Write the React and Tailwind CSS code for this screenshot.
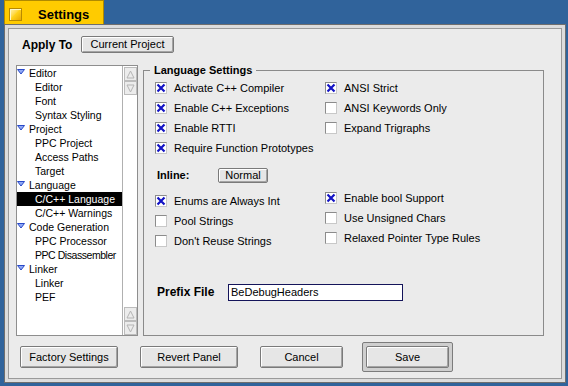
import React from 'react';

const tree = [
  { label: 'Editor', cat: true },
  { label: 'Editor' },
  { label: 'Font' },
  { label: 'Syntax Styling' },
  { label: 'Project', cat: true },
  { label: 'PPC Project' },
  { label: 'Access Paths' },
  { label: 'Target' },
  { label: 'Language', cat: true },
  { label: 'C/C++ Language', selected: true },
  { label: 'C/C++ Warnings' },
  { label: 'Code Generation', cat: true },
  { label: 'PPC Processor' },
  { label: 'PPC Disassembler', tight: true },
  { label: 'Linker', cat: true },
  { label: 'Linker' },
  { label: 'PEF' },
];

const font = "font-['Liberation_Sans',Arial,sans-serif]";

function Check({ on, label }) {
  return (
    <div className="flex h-[20px] items-center gap-[7px]">
      <span className="flex h-[12px] w-[12px] shrink-0 items-center justify-center border border-[#8c8c8c] border-b-[#c8c8c8] border-r-[#c8c8c8] bg-white">
        {on ? (
          <svg width="10" height="10" viewBox="0 0 10 10">
            <path d="M1.5 1.5 L8.5 8.5 M8.5 1.5 L1.5 8.5" stroke="#1212c4" strokeWidth="2.2" />
          </svg>
        ) : null}
      </span>
      <span className="whitespace-nowrap text-[11px] text-black">{label}</span>
    </div>
  );
}

function Button({ children, className = '' }) {
  return (
    <div
      className={`flex items-center justify-center whitespace-nowrap rounded-[2px] border border-[#7a7a7a] bg-[#e6e6e6] text-[11px] text-black shadow-[inset_1px_1px_0_#ffffff,inset_-1px_-1px_0_#a4a4a4] ${className}`}
    >
      {children}
    </div>
  );
}

function Arrow({ up }) {
  return (
    <div className="flex h-[14px] w-[13px] items-center justify-center border border-[#bcbcbc] bg-[#ececec]">
      <svg width="9" height="9" viewBox="0 0 9 9">
        {up ? (
          <path d="M4.5 1 L8 8 L1 8 Z" fill="none" stroke="#b4b4b4" strokeWidth="1" />
        ) : (
          <path d="M1 1 L8 1 L4.5 8 Z" fill="none" stroke="#b4b4b4" strokeWidth="1" />
        )}
      </svg>
    </div>
  );
}

function TreeList() {
  return (
    <div className="mt-[2px] flex h-[271px] w-[122px] border border-[#8e8e8e] bg-white">
      <div className="min-w-0 flex-1">
        {tree.map((item, i) => (
          <div
            key={i}
            className={`flex h-[14px] items-center overflow-hidden whitespace-nowrap text-[10.5px] leading-none ${item.selected ? 'bg-black text-white' : 'text-black'} ${item.cat ? '' : 'pl-[18px]'} ${item.tight ? 'tracking-[-0.45px]' : ''}`}
          >
            {item.cat ? (
              <svg width="8" height="6" viewBox="0 0 8 6" className="mr-[4px] mb-[3px] shrink-0">
                <path d="M0.5 0.5 L7.5 0.5 L4 5 Z" fill="#8fa8f4" stroke="#2848c8" strokeWidth="1" />
              </svg>
            ) : null}
            <span>{item.label}</span>
          </div>
        ))}
      </div>
      <div className="flex w-[15px] shrink-0 flex-col justify-between border-l border-[#b0b0b0] bg-white pl-[1px] pt-[1px]">
        <div>
          <Arrow up />
          <Arrow />
        </div>
        <div>
          <Arrow up />
          <Arrow />
        </div>
      </div>
    </div>
  );
}

function LanguageGroup() {
  return (
    <div className="flex h-[273px] w-[401px] flex-col">
      <div className="flex h-[14px]">
        <div className="h-[7px] w-[7px] self-end border-l border-t border-[#8a8a8a]" />
        <span className="px-[4px] text-[11px] font-bold leading-[14px] text-black">Language Settings</span>
        <div className="h-[7px] flex-1 self-end border-r border-t border-[#8a8a8a]" />
      </div>
      <div className="flex flex-1 flex-col border-x border-b border-[#8a8a8a] pl-[11px] pt-[1px]">
        <div className="flex">
          <div className="w-[170px]">
            <Check on label="Activate C++ Compiler" />
            <Check on label="Enable C++ Exceptions" />
            <Check on label="Enable RTTI" />
            <Check on label="Require Function Prototypes" />
          </div>
          <div>
            <Check on label="ANSI Strict" />
            <Check label="ANSI Keywords Only" />
            <Check label="Expand Trigraphs" />
          </div>
        </div>
        <div className="mt-[7px] flex h-[20px] items-center pl-[2px]">
          <span className="w-[61px] text-[11px] font-bold text-black">Inline:</span>
          <Button className="h-[15px] w-[50px]">Normal</Button>
        </div>
        <div className="mt-[6px] flex">
          <div className="w-[170px]">
            <Check on label="Enums are Always Int" />
            <Check label="Pool Strings" />
            <Check label="Don't Reuse Strings" />
          </div>
          <div className="-mt-[3px]">
            <Check on label="Enable bool Support" />
            <Check label="Use Unsigned Chars" />
            <Check label="Relaxed Pointer Type Rules" />
          </div>
        </div>
        <div className="mt-[31px] flex h-[20px] items-center pl-[2px]">
          <span className="w-[71px] text-[12px] font-bold text-black">Prefix File</span>
          <div className="flex h-[17px] w-[175px] items-center border border-[#14145a] bg-white pl-[2px] text-[11px] text-black">
            BeDebugHeaders
          </div>
        </div>
      </div>
    </div>
  );
}

export default function App() {
  return (
    <div className={`h-[386px] w-[568px] overflow-hidden bg-[#30639b] pl-[4px] ${font}`}>
      <div className="flex h-[24px] w-[100px] items-center gap-[16px] border-l border-r border-t border-[#b08a00] bg-[#ffcb00] pl-[4px] pt-[4px]">
        <div className="h-[13px] w-[13px] border border-[#b88a00] bg-gradient-to-br from-[#fff4a8] via-[#ffd21a] to-[#e8a800] shadow-[inset_1px_1px_0_#fff8c8]" />
        <span className="text-[13px] font-bold text-black">Settings</span>
      </div>
      <div className="h-[359px] w-[562px] border border-[#6e6e6e] bg-[#dcdcdc] p-[3px]">
        <div className="flex h-full flex-col border border-[#9a9a9a] bg-[#ebebeb]">
          <div className="mt-[7px] flex h-[17px] items-center pl-[13px]">
            <span className="w-[59px] text-[12px] font-bold text-black">Apply To</span>
            <Button className="h-[17px] w-[93px]">Current Project</Button>
          </div>
          <div className="mt-[10px] flex gap-[5px] pl-[7px]">
            <TreeList />
            <LanguageGroup />
          </div>
          <div className="mt-[6px] flex h-[30px] items-center pl-[11px]">
            <Button className="h-[22px] w-[98px]">Factory Settings</Button>
            <Button className="ml-[22px] h-[22px] w-[98px]">Revert Panel</Button>
            <Button className="ml-[22px] h-[22px] w-[83px]">Cancel</Button>
            <div className="ml-[19px] rounded-[2px] border border-[#7c7c7c] bg-[#cfcfcf] p-[3px]">
              <Button className="h-[22px] w-[83px]">Save</Button>
            </div>
          </div>
        </div>
      </div>
    </div>
  );
}
